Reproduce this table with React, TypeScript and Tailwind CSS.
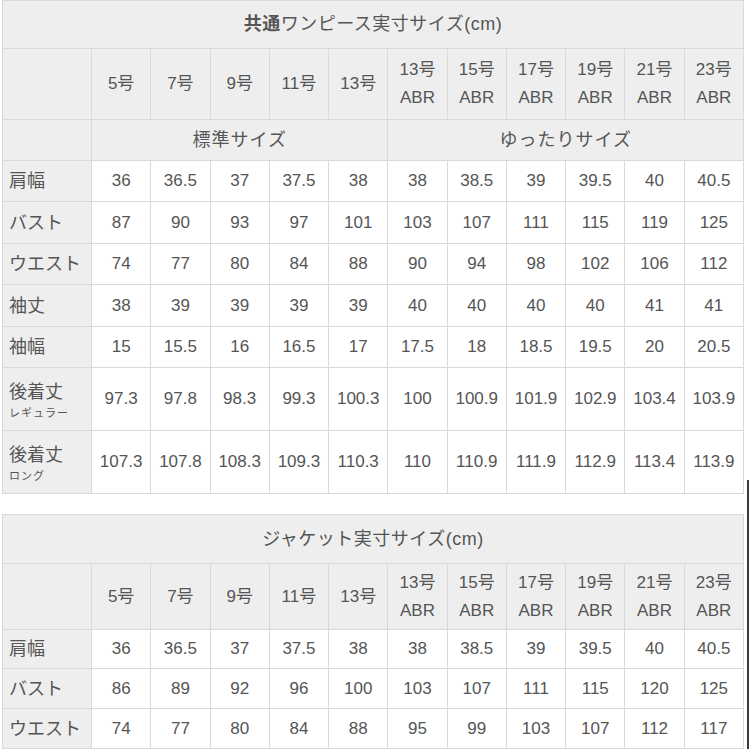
import * as React from "react";

// 実寸サイズ表（ワンピース / ジャケット）

const SIZES = ["5号", "7号", "9号", "11号", "13号"];
const ABR = ["13号", "15号", "17号", "19号", "21号", "23号"];

type Row = { label: string; sub?: string; values: string[]; tall?: boolean };

const dressRows: Row[] = [
  { label: "肩幅", values: ["36", "36.5", "37", "37.5", "38", "38", "38.5", "39", "39.5", "40", "40.5"] },
  { label: "バスト", values: ["87", "90", "93", "97", "101", "103", "107", "111", "115", "119", "125"] },
  { label: "ウエスト", values: ["74", "77", "80", "84", "88", "90", "94", "98", "102", "106", "112"] },
  { label: "袖丈", values: ["38", "39", "39", "39", "39", "40", "40", "40", "40", "41", "41"] },
  { label: "袖幅", values: ["15", "15.5", "16", "16.5", "17", "17.5", "18", "18.5", "19.5", "20", "20.5"] },
  {
    label: "後着丈",
    sub: "レギュラー",
    tall: true,
    values: ["97.3", "97.8", "98.3", "99.3", "100.3", "100", "100.9", "101.9", "102.9", "103.4", "103.9"],
  },
  {
    label: "後着丈",
    sub: "ロング",
    tall: true,
    values: ["107.3", "107.8", "108.3", "109.3", "110.3", "110", "110.9", "111.9", "112.9", "113.4", "113.9"],
  },
];

const jacketRows: Row[] = [
  { label: "肩幅", values: ["36", "36.5", "37", "37.5", "38", "38", "38.5", "39", "39.5", "40", "40.5"] },
  { label: "バスト", values: ["86", "89", "92", "96", "100", "103", "107", "111", "115", "120", "125"] },
  { label: "ウエスト", values: ["74", "77", "80", "84", "88", "95", "99", "103", "107", "112", "117"] },
];

const cell = "border border-[#d9d9d9] text-center align-middle";
const head = "bg-[#eeeeee]";

function SizeHeader({ height }: { height: string }) {
  return (
    <tr className={height}>
      <th className={`${cell} ${head}`} />
      {SIZES.map((s) => (
        <th key={s} className={`${cell} ${head} font-normal`}>
          {s}
        </th>
      ))}
      {ABR.map((s) => (
        <th key={s} className={`${cell} ${head} font-normal leading-[28px]`}>
          {s}
          <br />
          ABR
        </th>
      ))}
    </tr>
  );
}

function DataRow({ row, height }: { row: Row; height: string }) {
  return (
    <tr className={height}>
      <th className={`${cell} ${head} pl-[6px] text-left font-normal text-[18px]`}>
        <div className="leading-[26px]">{row.label}</div>
        {row.sub && <div className="mt-[1px] text-[11px] leading-[14px] tracking-[1px]">{row.sub}</div>}
      </th>
      {row.values.map((v, i) => (
        <td key={i} className={`${cell} bg-white`}>
          {v}
        </td>
      ))}
    </tr>
  );
}

function Cols() {
  return (
    <colgroup>
      <col className="w-[89px]" />
      {Array.from({ length: 11 }).map((_, i) => (
        <col key={i} />
      ))}
    </colgroup>
  );
}

export default function App() {
  return (
    <div
      className="relative h-[749px] w-[749px] overflow-hidden bg-white pl-[2px] text-[17px] text-[#555555]"
      style={{ fontFamily: '"Liberation Sans", "Noto Sans CJK JP", sans-serif' }}
    >
      <table className="w-[742px] table-fixed border-collapse bg-[#eeeeee]">
        <Cols />
        <tbody>
          <tr className="h-[48px]">
            <th colSpan={12} className={`${cell} ${head} text-[18px] font-normal tracking-[0.5px]`}>
              <span className="font-bold">共通</span>ワンピース実寸サイズ(cm)
            </th>
          </tr>
          <SizeHeader height="h-[71px]" />
          <tr className="h-[41px]">
            <th className={`${cell} ${head}`} />
            <th colSpan={5} className={`${cell} ${head} text-[18px] font-normal tracking-[1px]`}>
              標準サイズ
            </th>
            <th colSpan={6} className={`${cell} ${head} text-[18px] font-normal tracking-[1px]`}>
              ゆったりサイズ
            </th>
          </tr>
          {dressRows.map((r, i) => (
            <DataRow
              key={i}
              row={r}
              height={r.tall ? "h-[63px]" : i === 1 || i === 3 ? "h-[42px]" : "h-[41px]"}
            />
          ))}
        </tbody>
      </table>

      <table className="mt-[20px] w-[742px] table-fixed border-collapse bg-[#eeeeee]">
        <Cols />
        <tbody>
          <tr className="h-[49px]">
            <th colSpan={12} className={`${cell} ${head} text-[18px] font-normal tracking-[0.5px]`}>
              ジャケット実寸サイズ(cm)
            </th>
          </tr>
          <SizeHeader height="h-[66px]" />
          {jacketRows.map((r, i) => (
            <DataRow key={i} row={r} height={i === 0 ? "h-[39px]" : "h-[40px]"} />
          ))}
          <tr className="h-[39px]">
            <th className={`${cell} ${head}`} />
            {Array.from({ length: 11 }).map((_, i) => (
              <td key={i} className={`${cell} bg-white`} />
            ))}
          </tr>
        </tbody>
      </table>

      <div className="absolute right-0 top-[480px] h-[269px] w-[2px] bg-[#3a3a3a]" />
    </div>
  );
}
